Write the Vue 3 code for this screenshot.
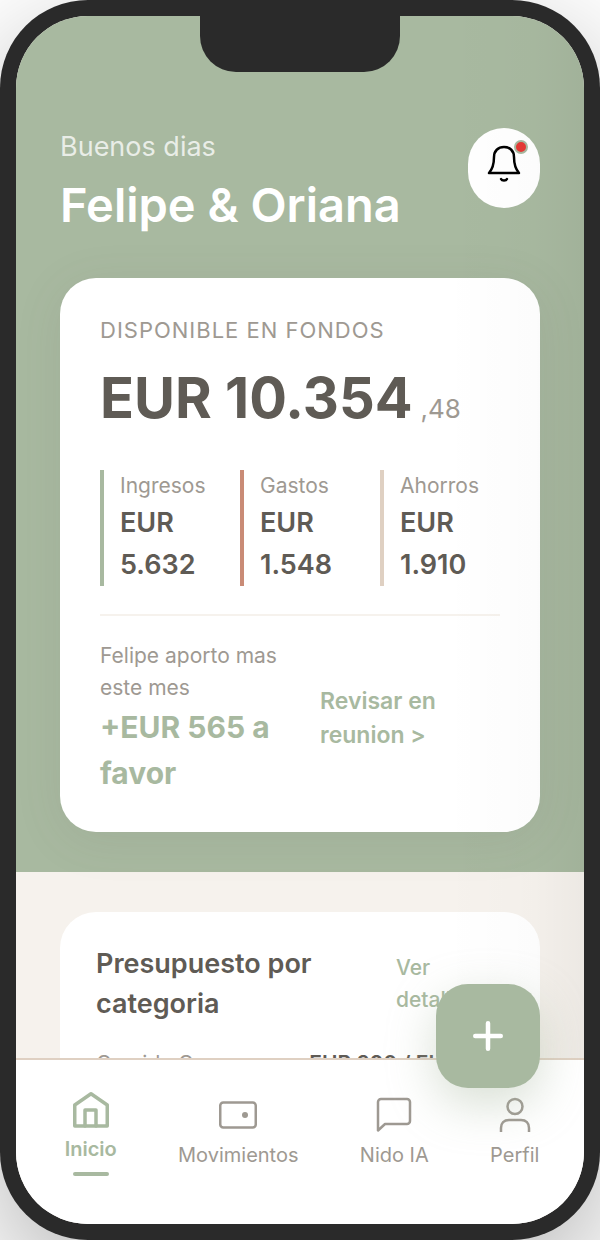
<script setup>
const metrics = [
  { label: 'Ingresos', value: 'EUR 5.632', tone: 'sage' },
  { label: 'Gastos', value: 'EUR 1.548', tone: 'clay' },
  { label: 'Ahorros', value: 'EUR 1.910', tone: 'sand' },
]
</script>

<template>
  <div class="phone">
    <div class="notch"></div>
    <div class="screen">
      <main class="content">
        <header class="hero">
          <div class="top">
            <div>
              <p class="greeting">Buenos dias</p>
              <h1>Felipe &amp; Oriana</h1>
            </div>
            <button class="bell" type="button" aria-label="Notificaciones">
              <svg width="40" height="40" viewBox="0 0 40 40" fill="none" stroke="#000" stroke-width="2.5" stroke-linecap="round" stroke-linejoin="round">
                <path d="M20 5C14 5 10 9 10 15c0 8-1.500 12-5 16h30c-3.500-4-5-8-5-16 0-6-4-10-10-10z" />
                <path d="M17 37c1 2 5 2 6 0" />
              </svg>
              <span class="dot"></span>
            </button>
          </div>

          <section class="card balance">
            <h2 class="caption">DISPONIBLE EN FONDOS</h2>
            <p class="amount"><b>EUR 10.354</b><span>,48</span></p>
            <div class="metrics">
              <div v-for="m in metrics" :key="m.label" class="metric" :class="m.tone">
                <p class="small">{{ m.label }}</p>
                <p class="value">{{ m.value }}</p>
              </div>
            </div>
            <div class="summary">
              <div>
                <p class="small">Felipe aporto mas este mes</p>
                <p class="favor">+EUR 565 a favor</p>
              </div>
              <button class="review" type="button">Revisar en reunion &gt;</button>
            </div>
          </section>
        </header>

        <section class="card budget">
          <div class="budget-head">
            <h2>Presupuesto por categoria</h2>
            <a href="#">Ver detalle</a>
          </div>
          <div class="row">
            <span>Comida Casa</span>
            <strong>EUR 380 / EUR 600</strong>
          </div>
        </section>
      </main>

      <nav class="tabs">
        <a class="tab active" href="#">
          <svg width="40" height="40" viewBox="0 0 40 40" fill="none" stroke="currentColor" stroke-width="3.500" stroke-linejoin="round" stroke-linecap="round">
            <path d="M3.750 15 20 3.750 36.250 15v21h-32.500z" />
            <path d="M14 36v-16h11v16" />
          </svg>
          <span>Inicio</span>
        </a>
        <a class="tab" href="#">
          <svg width="40" height="40" viewBox="0 0 40 40" fill="none" stroke="currentColor" stroke-width="2.500">
            <rect x="2.250" y="6.500" width="35.500" height="25" rx="3" />
            <circle cx="27" cy="19" r="3" fill="currentColor" stroke="none" />
          </svg>
          <span>Movimientos</span>
        </a>
        <a class="tab" href="#">
          <svg width="40" height="40" viewBox="0 0 40 40" fill="none" stroke="currentColor" stroke-width="2.500" stroke-linejoin="round">
            <path d="M4 34.500V6a3 3 0 0 1 3-3h26a3 3 0 0 1 3 3v19a3 3 0 0 1-3 3H11z" />
          </svg>
          <span>Nido IA</span>
        </a>
        <a class="tab" href="#">
          <svg width="40" height="40" viewBox="0 0 40 40" fill="none" stroke="currentColor" stroke-width="2.500">
            <circle cx="20" cy="10.500" r="7.500" />
            <path d="M6 36v-4c0-5 3-8 8-8h12c5 0 8 3 8 8v4" />
          </svg>
          <span>Perfil</span>
        </a>
      </nav>

      <button class="fab" type="button" aria-label="Agregar">
        <svg width="32" height="32" viewBox="0 0 32 32" fill="none" stroke="#fff" stroke-width="4.500" stroke-linecap="round">
          <path d="M16 3.250v25.500M3.250 16h25.500" />
        </svg>
      </button>
    </div>
  </div>
</template>

<style>
body {
  background: #fff;
}
</style>

<style scoped>
* {
  box-sizing: border-box;
}
p, h1, h2 {
  margin: 0;
}
button {
  border: 0;
  padding: 0;
  font: inherit;
  cursor: pointer;
}
a {
  text-decoration: none;
}
.phone {
  position: relative;
  height: calc(100vh - 2px);
  padding: 16px;
  background: #2a2a2a;
  border-radius: 88px;
  box-shadow: 0 40px 120px rgba(0, 0, 0, 0.3);
  font-family: Inter, "Open Sans", sans-serif;
  color: #5f5b55;
}
.notch {
  position: absolute;
  z-index: 4;
  top: 16px;
  left: 50%;
  margin-left: -100px;
  width: 200px;
  height: 56px;
  background: #2a2a2a;
  border-radius: 0 0 36px 36px;
}
.screen {
  position: relative;
  height: 100%;
  display: flex;
  flex-direction: column;
  overflow: hidden;
  border-radius: 72px;
  background: #f6f2ed;
}
.content {
  position: relative;
  flex: 1;
  min-height: 0;
  overflow: hidden;
}
.content::after {
  content: "";
  position: absolute;
  inset: 0;
  pointer-events: none;
  background: linear-gradient(to right, transparent 75%, rgba(0, 0, 0, 0.012) 91%, rgba(0, 0, 0, 0.04));
}
.hero {
  padding: 112px 44px 40px;
  background: #a8b9a0;
}
.top {
  display: flex;
  justify-content: space-between;
  align-items: flex-start;
  margin-bottom: 40px;
}
.greeting {
  font-size: 27px;
  line-height: 38px;
  color: rgba(255, 255, 255, 0.75);
}
h1 {
  margin-top: 6px;
  font-size: 47px;
  line-height: 66px;
  font-weight: 600;
  color: #fff;
  white-space: nowrap;
}
.bell {
  position: relative;
  width: 72px;
  height: 80px;
  flex: none;
  display: grid;
  place-items: center;
  padding-bottom: 12px;
  background: #fff;
  border-radius: 36px;
}
.dot {
  position: absolute;
  top: 12px;
  right: 12px;
  width: 14px;
  height: 14px;
  border: 2px solid #a8b9a0;
  background: #e53935;
  border-radius: 50%;
}
.card {
  background: #fff;
  border-radius: 36px;
}
.balance {
  padding: 36px 40px;
  box-shadow: 0 8px 48px rgba(95, 91, 85, 0.1);
}
.caption {
  font-size: 22px;
  line-height: 33px;
  font-weight: 400;
  letter-spacing: 1px;
  color: #9e9992;
}
.amount {
  display: flex;
  align-items: baseline;
  gap: 8px;
  margin: 18px 0 38px;
  line-height: 67px;
  white-space: nowrap;
}
.amount b {
  font-size: 56px;
  font-weight: 700;
}
.amount span {
  font-size: 26px;
  line-height: 39px;
  color: #9e9992;
}
.metrics {
  display: grid;
  grid-template-columns: repeat(3, 1fr);
  gap: 20px;
}
.metric {
  padding-left: 16px;
  border-left: 4px solid;
}
.sage {
  border-color: #a8b9a0;
}
.clay {
  border-color: #c98b76;
}
.sand {
  border-color: #dfd0c2;
}
.small {
  font-size: 21px;
  line-height: 32px;
  color: #9e9992;
}
.value {
  font-size: 27px;
  line-height: 42px;
  font-weight: 600;
  color: #5f5b55;
}
.summary {
  display: grid;
  grid-template-columns: 1fr 1fr;
  gap: 40px;
  align-items: center;
  margin-top: 28px;
  padding-top: 24px;
  border-top: 2px solid #f6f2ed;
}
.favor {
  font-size: 30px;
  line-height: 46px;
  font-weight: 700;
  color: #a8b9a0;
}
.review {
  background: none;
  text-align: left;
  font-size: 23px;
  line-height: 34px;
  font-weight: 600;
  color: #a8b9a0;
}
.budget {
  margin: 40px 44px;
  padding: 32px 36px;
}
.budget-head {
  display: flex;
  justify-content: space-between;
  align-items: center;
}
.budget-head h2 {
  width: 240px;
  font-size: 27px;
  line-height: 40px;
  font-weight: 600;
}
.budget-head a {
  width: 108px;
  padding-right: 20px;
  font-size: 21px;
  line-height: 32px;
  font-weight: 500;
  color: #a8b9a0;
}
.row {
  display: flex;
  justify-content: space-between;
  margin-top: 24px;
  font-size: 21px;
  line-height: 32px;
  white-space: nowrap;
  color: #9e9992;
}
.row strong {
  font-weight: 600;
  color: #5f5b55;
}
.tabs {
  position: relative;
  flex: none;
  display: flex;
  justify-content: space-around;
  align-items: center;
  padding: 30px 14px 48px 18px;
  background: #fff;
  border-top: 2px solid #dfd0c2;
}
.tab {
  display: flex;
  flex-direction: column;
  align-items: center;
  gap: 4px;
  font-size: 20px;
  line-height: 30px;
  color: #9e9992;
}
.tab svg {
  display: block;
}
.active {
  font-weight: 600;
  color: #a8b9a0;
}
.active::after {
  content: "";
  width: 36px;
  height: 4px;
  margin-top: 4px;
  border-radius: 2px;
  background: #a8b9a0;
}
.fab {
  position: absolute;
  right: 44px;
  bottom: 136px;
  width: 104px;
  height: 104px;
  display: grid;
  place-items: center;
  background: #a8b9a0;
  border-radius: 32px;
  box-shadow: 0 16px 48px rgba(168, 185, 160, 0.45);
}
</style>
